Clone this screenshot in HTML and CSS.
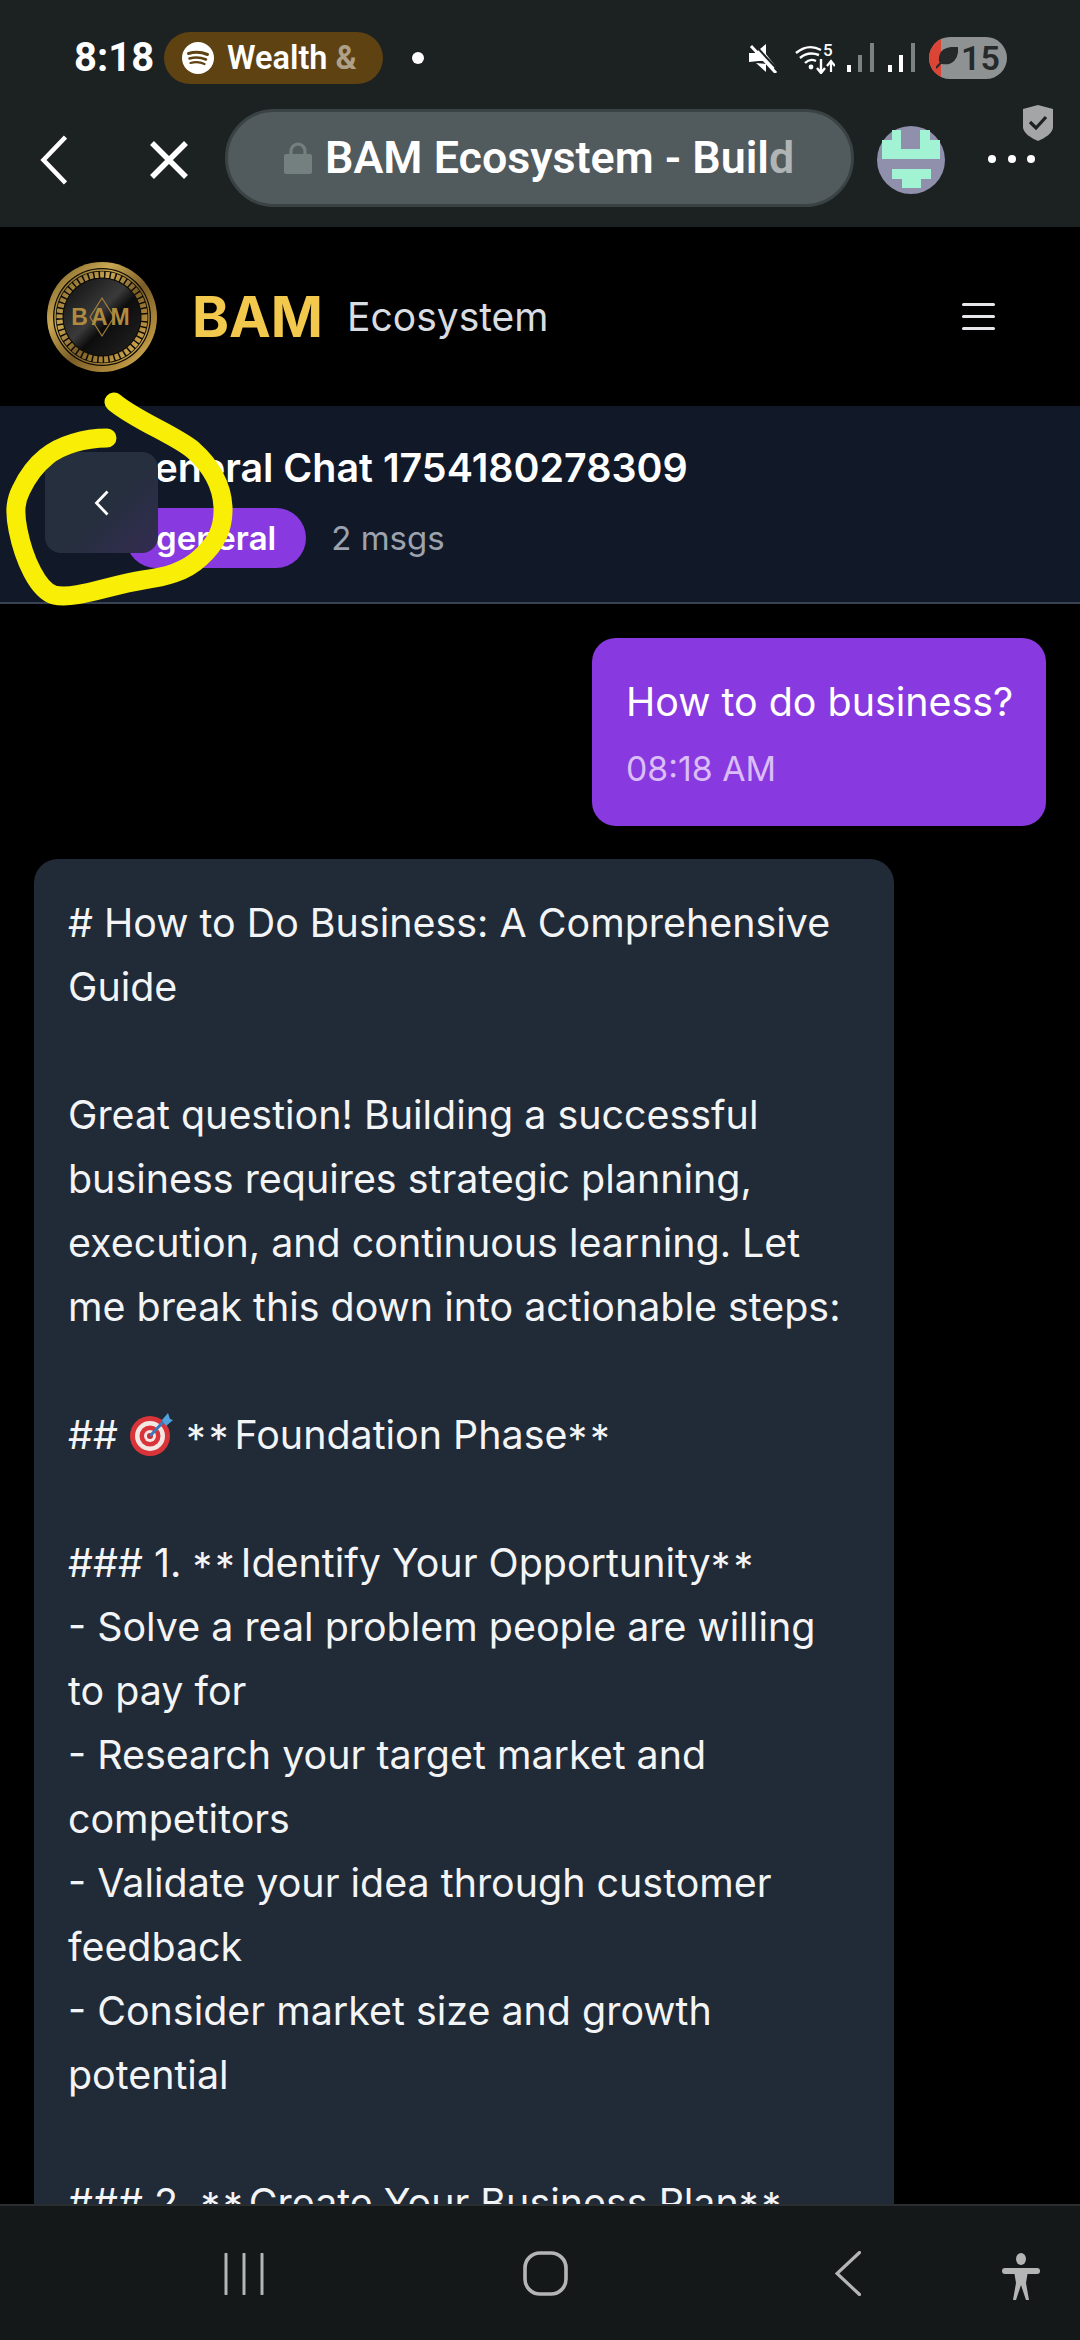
FILE: index.html
```html
<!DOCTYPE html>
<html lang="en">
<head>
<meta charset="utf-8">
<title>BAM Ecosystem</title>
<link rel="stylesheet" href="styles.css">
</head>
<body>
<div class="phone">
  <div class="chrome">
    <div class="status">
      <span class="time">8:18</span>
      <span class="media">
        <svg class="spot" viewBox="0 0 32 32"><circle cx="16" cy="16" r="16" fill="#fff"/><g fill="none" stroke="#5e4212" stroke-linecap="round"><path d="M6.5 11.5Q16 8.5 25.5 12.5" stroke-width="3"/><path d="M7.5 16.5Q16 14 24 17.5" stroke-width="2.6"/><path d="M8.5 21Q16 19 22.5 22" stroke-width="2.2"/></g></svg>
        <span class="media-text">Wealth <span class="fade">&amp;</span></span>
      </span>
      <span class="dot"></span>
      <span class="spacer"></span>
      <svg class="ic-mute" viewBox="0 0 29 30"><path d="M0 10h6L17 1v10l10 13-3 2-7-8v0H10L0 19z" fill="#fff"/><path d="M7 20l10 9V21z" fill="#fff"/><path d="M2 3l25 27" stroke="#fff" stroke-width="3"/><path d="M5 1l24 26" stroke="#1c2122" stroke-width="2"/></svg>
      <svg class="ic-wifi" viewBox="0 0 40 31"><g fill="none" stroke="#fff" stroke-width="2.4"><path d="M1 10Q13 0 26 7"/><path d="M5 15Q13 8 24 12"/><path d="M10 20Q15 15 21 18"/></g><circle cx="16" cy="24" r="2.4" fill="#fff"/><text x="28" y="13" class="wifi-five">5</text><path d="M26 16v13M22 25l4 5 4-5" fill="none" stroke="#fff" stroke-width="2.4"/><path d="M36 29V19M32 23l4-5 4 5" fill="none" stroke="#fff" stroke-width="2.2"/></svg>
      <svg class="ic-sig" viewBox="0 0 28 30"><rect x="1" y="22" width="4" height="7" fill="#fff"/><rect x="12" y="12" width="4" height="17" fill="#7d8182"/><rect x="24" y="0" width="4" height="29" fill="#7d8182"/></svg>
      <svg class="ic-sig sig2" viewBox="0 0 28 30"><rect x="1" y="22" width="4" height="7" fill="#fff"/><rect x="12" y="12" width="4" height="17" fill="#fff"/><rect x="24" y="0" width="4" height="29" fill="#7d8182"/></svg>
      <span class="battery">
        <span class="bat-red"></span>
        <svg class="leaf" viewBox="0 0 22 22"><path d="M21 1C10 0 3 4 4 14l2 2C16 18 22 11 21 1zM0 21L11 9" fill="#26292a" stroke="#26292a" stroke-width="2"/></svg>
        <span class="bat-num">15</span>
      </span>
    </div>
    <div class="toolbar">
      <svg class="tb-back" viewBox="0 0 27 50"><path d="M25.5 2L3.5 25l22 23" fill="none" stroke="#fff" stroke-width="4.5"/></svg>
      <svg class="tb-close" viewBox="0 0 38 38"><path d="M2 2l34 34M36 2L2 36" fill="none" stroke="#fff" stroke-width="5.5"/></svg>
      <div class="url">
        <svg class="lock" viewBox="0 0 28 32"><path d="M7 13V9a7 7 0 0 1 14 0v4" fill="none" stroke="#747f80" stroke-width="3.2"/><rect y="12" width="28" height="20" rx="2" fill="#747f80"/></svg>
        <span class="url-text">BAM Ecosystem - Buil<span class="url-fade">d</span></span>
      </div>
      <svg class="avatar" viewBox="0 0 68 68"><circle cx="34" cy="34" r="34" fill="#9090ad"/><path d="M5 33V14h10V4h9v19h19V4h10v10h10v19z" fill="#a1f3d3"/><path d="M15 43h39v10H44v9H25v-9H15z" fill="#a1f3d3"/></svg>
      <div class="more">
        <svg class="shield" viewBox="0 0 30 36"><path d="M15 0l15 4v18c0 6-8 11-15 14C8 33 0 28 0 22V4z" fill="#a3a5a6"/><path d="M7 17l6 6 10-11" fill="none" stroke="#1c2122" stroke-width="3.2"/></svg>
        <span class="dots"><i></i><i></i><i></i></span>
      </div>
    </div>
  </div>

  <header class="app-head">
    <svg class="logo" viewBox="0 0 110 110">
      <defs>
        <linearGradient id="gold" x1="0" y1="0" x2="1" y2="1"><stop offset="0" stop-color="#6f5420"/><stop offset=".3" stop-color="#c9a752"/><stop offset=".55" stop-color="#7a5d26"/><stop offset=".8" stop-color="#b48d3d"/><stop offset="1" stop-color="#e6c96f"/></linearGradient>
        <linearGradient id="disc" x1="0" y1="0" x2="1" y2="1"><stop offset="0" stop-color="#0c0c0c"/><stop offset=".45" stop-color="#3a3a3a"/><stop offset=".58" stop-color="#0d0d0d"/><stop offset="1" stop-color="#242424"/></linearGradient>
      </defs>
      <circle cx="55" cy="55" r="55" fill="url(#gold)"/>
      <circle cx="55" cy="55" r="49" fill="#0e0b04"/>
      <circle cx="55" cy="55" r="47" fill="none" stroke="url(#gold)" stroke-width="1.4"/>
      <circle cx="55" cy="55" r="42.5" fill="none" stroke="url(#gold)" stroke-width="6" stroke-dasharray="4 1.5"/>
      <circle cx="55" cy="55" r="38.5" fill="url(#disc)"/>
      <path d="M55 36L67 55 55 74 43 55z" fill="none" stroke="#a5803a" stroke-width="1.2"/>
      <text x="55" y="63" class="logo-text">BAM</text>
    </svg>
    <span class="brand">BAM</span>
    <span class="eco">Ecosystem</span>
    <span class="spacer"></span>
    <span class="burger"><i></i><i></i><i></i></span>
  </header>

  <section class="chat-head">
    <h1 class="chat-title">General Chat 1754180278309</h1>
    <div class="chat-meta">
      <span class="tag">general</span>
      <span class="count">2 msgs</span>
    </div>
    <button class="side-toggle" aria-label="Back">
      <svg viewBox="0 0 15 26"><path d="M13.5 1.5L2.5 13l11 11.5" fill="none" stroke="#fff" stroke-width="2.8"/></svg>
    </button>
  </section>

  <main class="messages">
    <div class="msg-user">
      <p class="msg-user-text">How to do business?</p>
      <p class="msg-time">08:18 AM</p>
    </div>
    <div class="msg-bot">
      <p># How to Do Business: A Comprehensive Guide</p>
      <p>&nbsp;</p>
      <p>Great question! Building a successful business requires strategic planning, execution, and continuous learning. Let me break this down into actionable steps:</p>
      <p>&nbsp;</p>
      <p>## <svg class="target" viewBox="0 0 44 44"><circle cx="21" cy="24" r="20" fill="#d8343a"/><circle cx="21" cy="24" r="15" fill="#f3e7e4"/><circle cx="21" cy="24" r="10.5" fill="#d8343a"/><circle cx="21" cy="24" r="6" fill="#f3e7e4"/><circle cx="21" cy="24" r="3" fill="#c92c33"/><path d="M21 24L36 8" stroke="#3d79b8" stroke-width="3"/><path d="M33 8l6-7 2 6 3 1-7 6z" fill="#4fa3dd"/></svg> <span class="ast ast-open">**</span>Foundation Phase<span class="ast">**</span></p>
      <p>&nbsp;</p>
      <p>### 1. <span class="ast ast-open">**</span>Identify Your Opportunity<span class="ast">**</span></p>
      <p>- Solve a real problem people are willing to pay for</p>
      <p>- Research your target market and competitors</p>
      <p>- Validate your idea through customer feedback</p>
      <p>- Consider market size and growth potential</p>
      <p>&nbsp;</p>
      <p>### 2. <span class="ast ast-open">**</span>Create Your Business Plan<span class="ast">**</span></p>
    </div>
  </main>

  <nav class="sysnav">
    <svg class="nav-recent" viewBox="0 0 40 42"><path d="M2 1v40M20 1v40M38 1v40" stroke="#b4b6b6" stroke-width="3" stroke-linecap="round"/></svg>
    <svg class="nav-home" viewBox="0 0 45 45"><rect x="2" y="2" width="41" height="41" rx="15" fill="none" stroke="#b4b6b6" stroke-width="3.6"/></svg>
    <svg class="nav-back" viewBox="0 0 26 45"><path d="M24.5 1.5L2 22.5l22.5 21" fill="none" stroke="#b4b6b6" stroke-width="3.2" stroke-linecap="round"/></svg>
    <svg class="nav-a11y" viewBox="0 0 38 47"><ellipse cx="19" cy="6" rx="5" ry="6" fill="#b4b6b6"/><path d="M3 18h32" stroke="#b4b6b6" stroke-width="6" stroke-linecap="round"/><path d="M12 18h14l-2 12 3 17h-3l-5-15-5 15h-3l3-17z" fill="#b4b6b6"/></svg>
  </nav>

  <svg class="scribble" viewBox="0 390 250 225"><path d="M114 402C135 420 175 435 193 450C210 465 222 485 223 507C224 530 215 545 200 558C185 572 165 577 143 580C110 585 75 600 54 595C38 590 24 560 18 530C14 510 16 500 21 490C28 475 36 465 46 457C60 445 85 438 107 438" fill="none" stroke="#f8ee06" stroke-width="19" stroke-linecap="round" stroke-linejoin="round"/></svg>
</div>
</body>
</html>
```
FILE: styles.css
```css
* { box-sizing: border-box; margin: 0; padding: 0; }
html, body { width: 1080px; height: 2340px; overflow: hidden; background: #000; }
body { font-family: Inter, "Liberation Sans", sans-serif; color: #fff; }
.phone { position: relative; width: 1080px; height: 2340px; display: flex; flex-direction: column; overflow: hidden; }
.spacer { flex: 1; }

.chrome { height: 227px; background: #1c2122; flex: none; }
.status { height: 109px; padding: 32px 73px 0 74px; display: flex; align-items: flex-start; }
.time { font: 700 40px/52px Roboto, sans-serif; width: 90px; flex: none; }
.media { height: 52px; width: 219px; border-radius: 26px; background: #5e4212; display: flex; align-items: center; padding-left: 18px; gap: 13px; }
.spot { width: 32px; height: 32px; }
.media-text { font: 600 32.5px/52px Roboto, sans-serif; }
.fade { opacity: .5; }
.dot { width: 12px; height: 12px; border-radius: 50%; background: #fff; margin: 20px 0 0 29px; }
.ic-mute { width: 29px; height: 30px; margin-top: 11px; }
.ic-wifi { width: 40px; height: 31px; margin: 11px 0 0 17px; }
.ic-sig { width: 28px; height: 30px; margin: 11px 0 0 11px; }
.sig2 { margin-left: 13px; }
.wifi-five { font: 500 17px Roboto, sans-serif; fill: #fff; }
.battery { position: relative; width: 78px; height: 42px; margin: 5px 0 0 14px; border-radius: 21px; background: #8f9293; overflow: hidden; display: flex; align-items: center; padding-left: 32px; }
.bat-red { position: absolute; left: 0; top: 0; width: 12px; height: 42px; background: #dc4436; }
.leaf { position: absolute; left: 7px; top: 10px; width: 22px; height: 22px; }
.bat-num { font: 600 34px/42px Roboto, sans-serif; color: #26292a; position: relative; }

.toolbar { height: 118px; display: flex; align-items: flex-start; }
.tb-back { width: 27px; height: 50px; margin: 26px 0 0 40px; }
.tb-close { width: 38px; height: 38px; margin: 32px 0 0 83px; }
.url { width: 629px; height: 98px; margin: 0 0 0 37px; border-radius: 49px; background: #515a5c; border: 3px solid #3a4244; display: flex; align-items: center; padding-left: 56px; gap: 13px; }
.lock { width: 28px; height: 32px; }
.url-text { font: 600 44.8px/92px Roboto, sans-serif; white-space: nowrap; }
.url-fade { opacity: .55; }
.avatar { width: 68px; height: 68px; margin: 17px 0 0 23px; }
.more { position: relative; flex: 1; }
.shield { position: absolute; right: 27px; top: -4px; width: 30px; height: 36px; }
.dots { position: absolute; right: 45px; top: 46px; display: flex; gap: 11.5px; }
.dots i { width: 8px; height: 8px; border-radius: 50%; background: #fff; display: block; }

.app-head { height: 179px; flex: none; background: #000; display: flex; align-items: center; padding: 0 85px 0 47px; }
.logo { width: 110px; height: 110px; }
.logo-text { font: 700 23px "Liberation Sans", sans-serif; fill: #b08a3f; text-anchor: middle; letter-spacing: 3px; }
.brand { margin-left: 35px; font: 700 56px/70px Inter, sans-serif; color: #f2c94c; }
.eco { margin-left: 24px; font: 400 39px/60px Inter, sans-serif; color: #d9dce1; }
.burger { display: flex; flex-direction: column; gap: 8.5px; width: 33px; }
.burger i { height: 3.5px; background: #e5e7eb; display: block; border-radius: 2px; }

.chat-head { position: relative; height: 198px; flex: none; background: #111827; border-bottom: 2px solid #374151; padding: 34px 0 0 125px; }
.chat-title { font: 600 39.4px/56px Inter, sans-serif; }
.chat-meta { display: flex; align-items: center; margin-top: 12px; padding-left: 1px; }
.tag { height: 60px; border-radius: 30px; background: #8839df; font: 600 33px/60px Inter, sans-serif; padding: 0 30px; }
.count { margin-left: 25px; font: 400 33px/60px Inter, sans-serif; color: #9ca3af; }
.side-toggle { position: absolute; left: 45px; top: 46px; width: 113px; height: 101px; border: 0; border-radius: 16px; background: linear-gradient(135deg, #262f3e 55%, #332c52); display: flex; align-items: center; justify-content: center; }
.side-toggle svg { width: 15px; height: 26px; }

.messages { flex: 1; min-height: 0; overflow: hidden; padding: 34px 34px 0; display: flex; flex-direction: column; align-items: flex-start; gap: 33px; }
.msg-user { align-self: flex-end; width: 454px; height: 188px; flex: none; background: #8839df; border-radius: 24px; padding: 34px 34px 0; }
.msg-user-text { font: 400 39.4px/60px Inter, sans-serif; white-space: nowrap; }
.msg-time { font: 400 33.8px/50px Inter, sans-serif; color: #dbbdf7; margin-top: 12px; }
.msg-bot { width: 860px; flex: none; background: #212a37; border-radius: 24px; padding: 32px 34px; font: 400 39.4px/64px Inter, sans-serif; color: #f3f4f6; }
.ast { letter-spacing: 3px; line-height: 0; vertical-align: -4px; }
.ast-open { margin-right: 3px; }
.target { width: 44px; height: 44px; vertical-align: -7px; margin-right: 2px; }

.sysnav { height: 136px; flex: none; background: #151819; border-top: 2px solid #2a2e30; position: relative; z-index: 2; display: flex; align-items: flex-start; padding-top: 45px; }
.nav-recent { width: 40px; height: 42px; margin: 2px 0 0 224px; }
.nav-home { width: 45px; height: 45px; margin-left: 259px; }
.nav-back { width: 26px; height: 45px; margin-left: 267px; }
.nav-a11y { width: 38px; height: 47px; margin: 2px 0 0 141px; }

.scribble { position: absolute; left: 0; top: 390px; width: 250px; height: 225px; }
```
